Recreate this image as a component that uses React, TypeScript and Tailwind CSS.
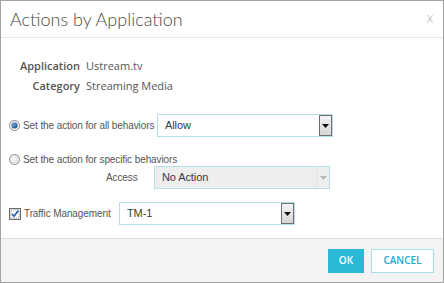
import React from 'react';

type SelectProps = {
  value: string;
  disabled?: boolean;
  width: string;
};

function Arrow({ disabled }: { disabled?: boolean }) {
  if (disabled) {
    return (
      <div className="flex h-full w-[13px] items-center justify-center border-l border-[#e3e3e3]">
        <svg width="7" height="4" viewBox="0 0 7 4">
          <path d="M0 0h7L3.5 4z" fill="#b8b8b8" />
        </svg>
      </div>
    );
  }
  return (
    <div className="flex h-full w-[13px] items-center justify-center border border-[#707070] bg-gradient-to-b from-[#f4f4f4] to-[#d6d6d6]">
      <svg width="7" height="4" viewBox="0 0 7 4">
        <path d="M0 0h7L3.5 4z" fill="#111" />
      </svg>
    </div>
  );
}

function Select({ value, disabled = false, width }: SelectProps) {
  return (
    <div
      className={`flex h-[23px] shrink-0 items-stretch border border-[#b3e0e6] ${width} ${
        disabled ? 'bg-[#eeeeee]' : 'bg-white'
      }`}
    >
      <span className="flex flex-1 items-center pl-[7px] text-[11px] tracking-[-0.1px] text-[#3a3a3a]">{value}</span>
      <Arrow disabled={disabled} />
    </div>
  );
}

function Radio({ checked }: { checked?: boolean }) {
  return (
    <svg width="11" height="11" viewBox="0 0 11 11" className="shrink-0">
      <defs>
        <radialGradient id={checked ? 'rOn' : 'rOff'} cx="0.4" cy="0.4" r="0.6">
          <stop offset="0" stopColor={checked ? '#6fa8dc' : '#ffffff'} />
          <stop offset="1" stopColor={checked ? '#1d4f8a' : '#dcdcdc'} />
        </radialGradient>
      </defs>
      <circle cx="5.5" cy="5.5" r="5" fill="#f2f2f2" stroke="#8a8a8a" />
      {checked ? (
        <circle cx="5.5" cy="5.5" r="3" fill="url(#rOn)" />
      ) : (
        <circle cx="5.5" cy="5.5" r="4" fill="url(#rOff)" />
      )}
    </svg>
  );
}

function Checkbox() {
  return (
    <svg width="12" height="12" viewBox="0 0 12 12" className="shrink-0">
      <rect x="0.5" y="0.5" width="11" height="11" fill="#e6e6e6" stroke="#6b6b6b" />
      <rect x="2" y="2" width="8" height="8" fill="#ffffff" stroke="#a0a0a0" strokeDasharray="1 1" />
      <path d="M3 6l2 2.2L9.2 2.8" fill="none" stroke="#1c56a6" strokeWidth="1.6" />
    </svg>
  );
}

export default function App() {
  return (
    <div className="flex h-[283px] w-[444px] flex-col border border-[#a3a3a3] bg-white">
      {/* Header */}
      <div className="flex h-[37px] shrink-0 items-center justify-between border-b border-[#e6e6e6] pl-[9px] pr-[10px]">
        <h1 className="text-[18px] font-light text-[#4a4a4a] font-['Lato',sans-serif]">Actions by Application</h1>
        <span className="text-[11px] text-[#c4c4c4] font-['Open_Sans',sans-serif]">X</span>
      </div>

      {/* Body */}
      <div className="flex flex-1 flex-col whitespace-nowrap pt-[18px] font-['Liberation_Sans',Arial,sans-serif] text-[10px] tracking-[-0.1px] text-[#555]">
        <div className="grid grid-cols-[79px_1fr] gap-x-[6px] font-['Open_Sans',sans-serif] text-[11px] tracking-normal text-[#555]">
          <span className="flex h-[20px] items-center justify-end font-semibold">Application</span>
          <span className="flex h-[20px] items-center">Ustream.tv</span>
          <span className="flex h-[20px] items-center justify-end font-semibold">Category</span>
          <span className="flex h-[20px] items-center">Streaming Media</span>
        </div>

        <div className="mt-[18px] flex items-center pl-[8px]">
          <Radio checked />
          <span className="ml-[3px] w-[134px]">Set the action for all behaviors</span>
          <Select value="Allow" width="w-[176px]" />
        </div>

        <div className="mt-[15px] flex h-[14px] items-center pl-[8px]">
          <Radio />
          <span className="ml-[3px]">Set the action for specific behaviors</span>
        </div>

        <div className="flex items-center pl-[105px]">
          <span className="w-[48px]">Access</span>
          <Select value="No Action" disabled width="w-[176px]" />
        </div>

        <div className="mt-[13px] flex items-center pl-[8px]">
          <Checkbox />
          <span className="ml-[3px] w-[95px]">Traffic Management</span>
          <Select value="TM-1" width="w-[176px]" />
        </div>
      </div>

      {/* Footer */}
      <div className="flex h-[44px] shrink-0 items-center justify-end gap-[7px] border-t border-[#dcdcdc] bg-[#f3f3f3] pr-[9px] font-['Open_Sans',sans-serif] text-[10px] font-semibold">
        <button className="h-[24px] w-[36px] bg-[#29b9d6] text-white">OK</button>
        <button className="h-[24px] w-[63px] border border-[#a8dde9] bg-white text-[#2aa7c9]">CANCEL</button>
      </div>
    </div>
  );
}
